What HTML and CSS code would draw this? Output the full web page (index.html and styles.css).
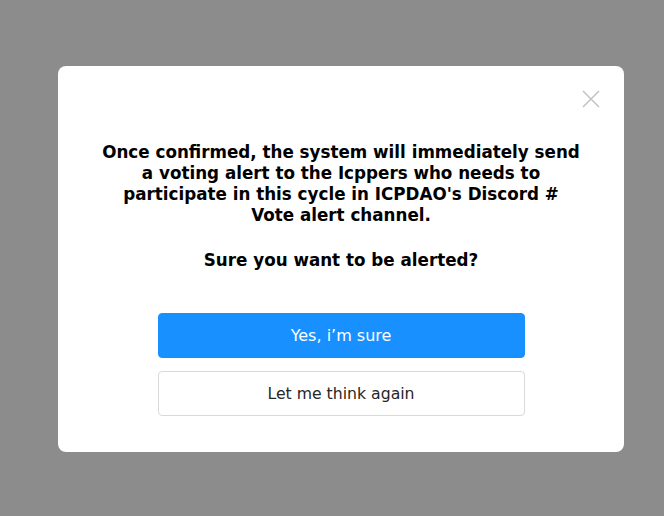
FILE: index.html
```html
<!DOCTYPE html>
<html>
<head>
<meta charset="utf-8">
<link rel="stylesheet" href="styles.css">
</head>
<body>
<div class="modal">
  <button class="close" aria-label="Close">
    <svg width="18" height="18" viewBox="0 0 18 18"><path d="M1 1L17 17M17 1L1 17" stroke="#c4c4c4" stroke-width="1.6" fill="none"/></svg>
  </button>
  <div class="message">
    <p>Once confirmed, the system will immediately send a voting alert to the Icppers who needs to participate in this cycle in ICPDAO's Discord # Vote alert channel.</p>
    <p>Sure you want to be alerted?</p>
  </div>
  <div class="actions">
    <button class="btn btn-primary">Yes, i’m sure</button>
    <button class="btn btn-default">Let me think again</button>
  </div>
</div>
</body>
</html>
```

FILE: styles.css
```css
html, body {
  margin: 0;
  padding: 0;
}
body {
  background: #8c8c8c;
  width: 664px;
  height: 516px;
  padding: 66px 0 0 58px;
  box-sizing: border-box;
  font-family: "DejaVu Sans", Verdana, sans-serif;
}
.modal {
  position: relative;
  width: 566px;
  height: 386px;
  background: #fff;
  border-radius: 8px;
  box-sizing: border-box;
  padding: 76px 40px 0;
  display: flex;
  flex-direction: column;
  align-items: center;
}
.close {
  position: absolute;
  top: 24px;
  right: 24px;
  border: 0;
  background: none;
  padding: 0;
  width: 18px;
  height: 18px;
}
.close svg { display: block; }
.message {
  text-align: center;
  font-weight: bold;
  font-size: 16.75px;
  line-height: 21px;
  color: #000;
  width: 480px;
}
.message p { margin: 0; }
.message p + p { margin-top: 24px; }
.actions {
  margin-top: 42px;
  width: 367px;
  display: flex;
  flex-direction: column;
  gap: 13px;
}
.btn {
  height: 45px;
  border-radius: 4px;
  font-family: "DejaVu Sans", Verdana, sans-serif;
  font-size: 16px;
  cursor: pointer;
}
.btn-primary {
  background: #1890ff;
  border: 1px solid #1890ff;
  color: #fff;
}
.btn-default {
  background: #fff;
  border: 1px solid #d9d9d9;
  color: #262626;
  font-size: 15.7px;
}
```
